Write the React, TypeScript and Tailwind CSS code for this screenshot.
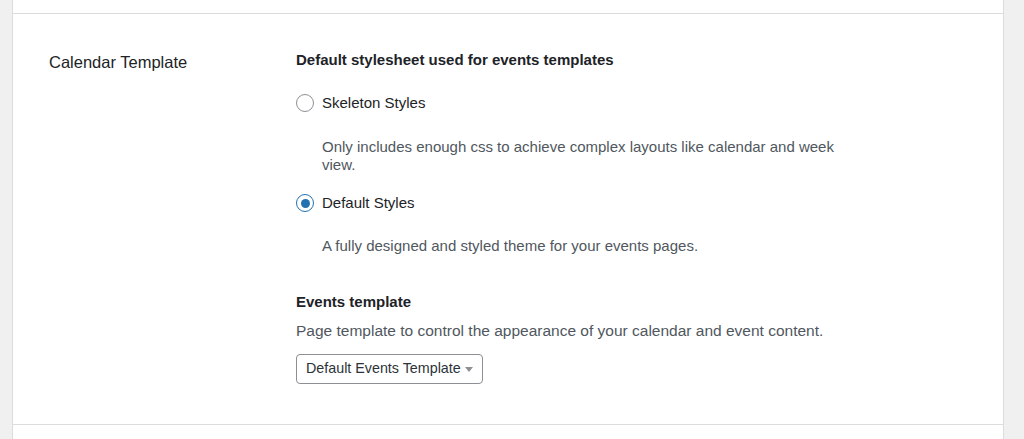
import { useState } from "react";

const font = { fontFamily: '"Liberation Sans", Arial, sans-serif' };

type Option = {
  id: string;
  label: string;
  description: string;
};

const options: Option[] = [
  {
    id: "skeleton",
    label: "Skeleton Styles",
    description: "Only includes enough css to achieve complex layouts like calendar and week view.",
  },
  {
    id: "default",
    label: "Default Styles",
    description: "A fully designed and styled theme for your events pages.",
  },
];

function Radio({ checked }: { checked: boolean }) {
  return (
    <span
      className={`flex h-[18px] w-[18px] shrink-0 items-center justify-center rounded-full border bg-white ${
        checked ? "border-[#2271b1]" : "border-[#8c8f94]"
      }`}
    >
      {checked ? <span className="h-[9px] w-[9px] rounded-full bg-[#2271b1]" /> : null}
    </span>
  );
}

export default function App() {
  const [selected, setSelected] = useState("default");

  return (
    <div className="min-h-[439px] bg-[#f0f0f1] pl-[12px] pr-[20px] text-[#1d2327]" style={font}>
      <div className="min-h-[439px] border-x border-[#dcdcde] bg-white">
        <div className="h-[13px]" />
        <div className="flex border-y border-[#dcdcde] pb-[40px] pt-[36px]">
          <div className="w-[283px] shrink-0 pl-[36px] pt-[2px] text-[16.5px] leading-[20px]">Calendar Template</div>

          <div className="flex-1">
            <h2 className="text-[15px] font-bold leading-[20px]">Default stylesheet used for events templates</h2>

            <div className="mt-[23px]">
              {options.map((option, i) => (
                <div key={option.id} className={i > 0 ? "mt-[19px]" : ""}>
                  <button
                    className="flex items-center gap-[8px] text-[15px] leading-[20px]"
                    onClick={() => setSelected(option.id)}
                    type="button"
                  >
                    <Radio checked={selected === option.id} />
                    <span>{option.label}</span>
                  </button>
                  <p
                    className={`max-w-[555px] pl-[26px] text-[15px] leading-[18px] text-[#50575e] ${
                      i === 0 ? "mt-[25px]" : "mt-[24px]"
                    }`}
                  >
                    {option.description}
                  </p>
                </div>
              ))}
            </div>

            <h3 className="mt-[37px] text-[15px] font-bold leading-[20px]">Events template</h3>
            <p className="mt-[9px] text-[15.5px] leading-[20px] text-[#50575e]">
              Page template to control the appearance of your calendar and event content.
            </p>

            <div className="mt-[13px] flex h-[30px] w-[187px] items-center justify-between rounded-[4px] border border-[#8c8f94] pl-[9px] pr-[9px] text-[14.3px] text-[#2c3338]">
              <span>Default Events Template</span>
              <svg width="8" height="5" viewBox="0 0 8 5">
                <path d="M0 0h8L4 5z" fill="#8c8f94" />
              </svg>
            </div>
          </div>
        </div>
      </div>
    </div>
  );
}
